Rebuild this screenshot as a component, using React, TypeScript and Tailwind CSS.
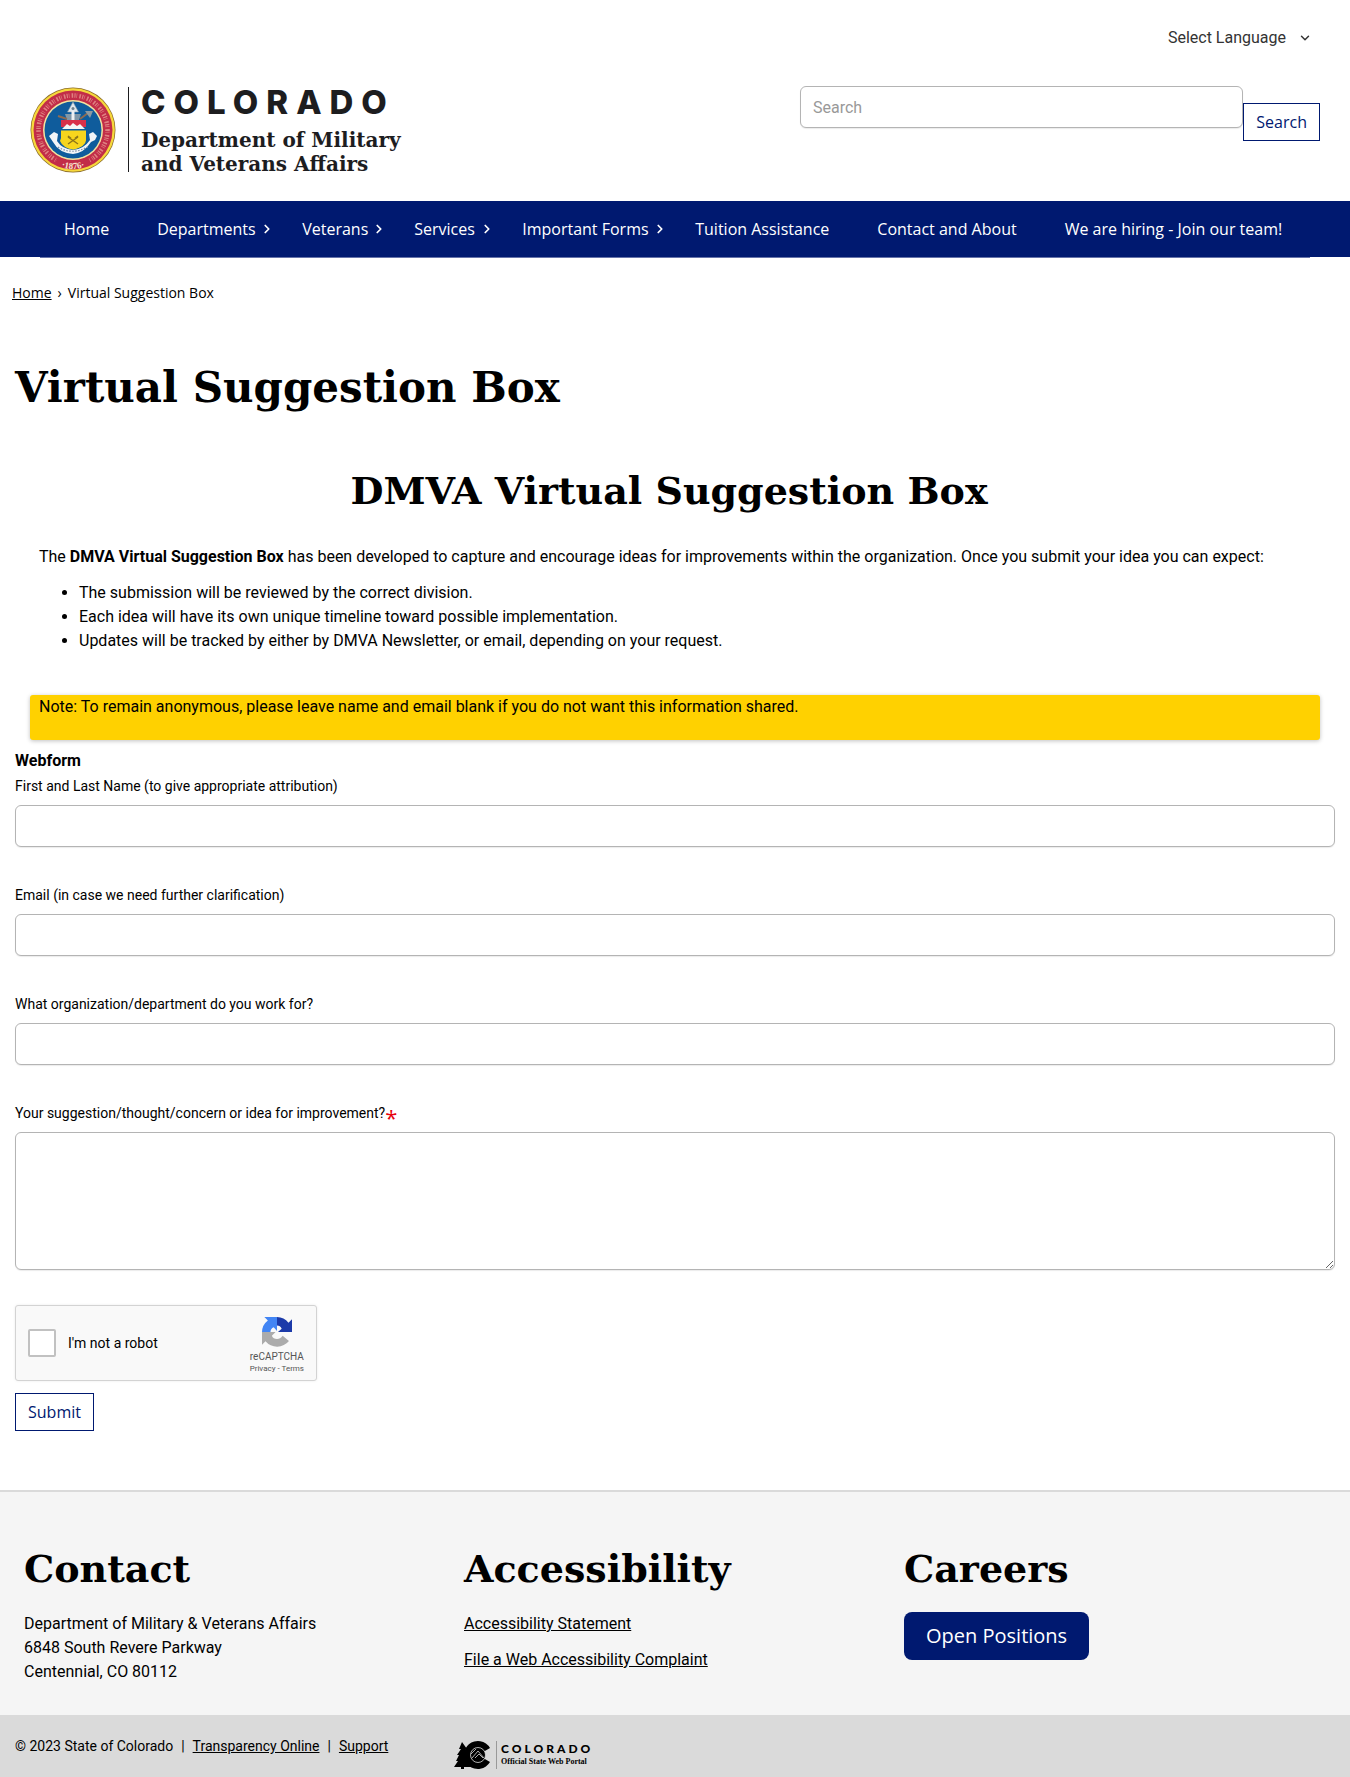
import { ChevronDown, ChevronRight } from "lucide-react";

const NAV = [
  { label: "Home", width: "", menu: false },
  { label: "Departments", width: "w-[145px]", menu: true },
  { label: "Veterans", width: "w-28", menu: true },
  { label: "Services", width: "w-[108px]", menu: true },
  { label: "Important Forms", width: "w-[173px]", menu: true },
  { label: "Tuition Assistance", width: "", menu: false },
  { label: "Contact and About", width: "", menu: false },
  { label: "We are hiring - Join our team!", width: "", menu: false },
];

const SERIF = "font-['DejaVu_Serif',serif] font-bold";
const SANS = "font-['Open_Sans',sans-serif]";
const FIELD =
  "block w-full rounded-md border border-[#b4b4b4] bg-white px-3 shadow-[0_1px_1px_rgba(0,0,0,0.08)] outline-none";
const OUTLINE_BUTTON =
  "h-[38px] border border-[#001970] bg-white px-3 font-['Open_Sans',sans-serif] text-[#001970]";
const LABEL = "mb-1.5 block text-sm leading-[26px]";

function Seal() {
  return (
    <svg viewBox="0 0 86 86" className="size-[86px] shrink-0" role="img" aria-label="State seal">
      <defs>
        <path id="year" d="M24 77Q43 87 62 77" />
      </defs>
      <circle cx="43" cy="43" r="42.500" fill="#8a6a2a" />
      <circle cx="43" cy="43" r="41.800" fill="#f6d83c" />
      <circle cx="43" cy="43" r="39.500" fill="#c22d48" />
      <circle cx="43" cy="43" r="30" fill="#f3e3a0" />
      <circle cx="43" cy="43" r="28.500" fill="#0f5c9c" />
      <circle cx="43" cy="43" r="34.500" fill="none" stroke="#eeb0a0" strokeWidth="4.500" strokeDasharray="1.100 1 0.600 2.200 1.600 1.300" strokeOpacity="0.650" />
      <path d="M43 15l5.500 10h-11z" fill="#dfe8ee" stroke="#8a9aa5" strokeWidth="0.600" />
      <circle cx="43" cy="21.500" r="1.500" fill="#6b7f8c" />
      <path d="M35 27h16l-2 6H37z" fill="#7f97a8" />
      <path d="M28 29l9 3M50 32l8-6" stroke="#8d6b52" strokeWidth="2" fill="none" />
      <path d="M55 24l8 0-3 7z" fill="#8d9aa2" />
      <path d="M41.500 24h3v12h-3z" fill="#eef1f3" />
      <path d="M31 33h25v7H31z" fill="#d8304a" />
      <path d="M32 42l5-5 3 2 3-3 4 3 3-2 5 5z" fill="#f5f5f5" />
      <path d="M31 43.500h25v9q0 7-12.500 10Q31 59.500 31 52.500z" fill="#f7d51d" />
      <path d="M38 49l10 8M48 49l-10 8" stroke="#8c7419" strokeWidth="1.600" />
      <path d="M19 49l5-4 4 2-1 7q5 8 16 9 11-1 17-10l-1-6 4-2 4 4-2 4-4 2q-7 11-18 12Q29 66 23 55z" fill="#f2f5f8" />
      <path d="M30 54q3 7 13 8.500Q54 60 56 53v-2H31z" fill="#f7d51d" />
      <path d="M38 50l10 7M48 50l-10 7" stroke="#8c7419" strokeWidth="1.400" />
      <path d="M28 60q15 9 31-1" stroke="#7d8fa6" strokeWidth="1.200" strokeDasharray="1.500 1.500" fill="none" />
      <path d="M25 76q18 9 36 0l-3-6q-15 8-30 0z" fill="#c22d48" />
      <text className="font-['Liberation_Serif',serif] text-[9px] font-bold" fill="#f8e3cf">
        <textPath href="#year" startOffset="50%" textAnchor="middle">·1876·</textPath>
      </text>
    </svg>
  );
}

function Recaptcha() {
  return (
    <svg viewBox="0 0 64 64" className="size-[30px]" aria-hidden="true">
      <path d="M64 32V5l-7.500 7.500A32 32 0 0 0 32 0v18q7 0 10 7l-8 7h30z" fill="#1c3aa9" />
      <path d="M32 0H5l7.500 7.500A32 32 0 0 0 0 32h18q0-7 7-10l7 8V0z" fill="#4285f4" />
      <path d="M0 32v27l7.500-7.500A32 32 0 0 0 57.500 51L44 40q-5 7-12 7-8 0-11-7l8-8z" fill="#ababab" />
    </svg>
  );
}

function PortalMark() {
  return (
    <svg viewBox="0 0 38 30" className="h-[30px] w-[38px] shrink-0" aria-hidden="true">
      <path d="M8 2l5 7h-2l4 6h-2l4 6h-3l4 6H10v2H7v-2H0l4-6H2l3-6H3l4-6H5z" fill="#000" />
      <path d="M36 8A14 14 0 1 0 36 22L30 18.500A7 7 0 1 1 30 11.500z" fill="#000" />
      <circle cx="24" cy="15" r="7.500" fill="#000" stroke="#dadada" strokeWidth="0.800" />
      <path d="M18 18l6-7 6 7M21 18l4-4 4 4M17 14l5-5" stroke="#dadada" strokeWidth="0.800" fill="none" />
    </svg>
  );
}

function TextField({ id, label }: { id: string; label: string }) {
  return (
    <div className="mb-[35px]">
      <label htmlFor={id} className={LABEL}>
        {label}
      </label>
      <input id={id} type="text" className={`${FIELD} h-[42px]`} />
    </div>
  );
}

export default function App() {
  return (
    <div className="bg-white font-['Roboto',sans-serif] text-base leading-6 text-black">
      <header>
        <div className="flex justify-end px-[38px] pt-[26px]">
          <button type="button" className="flex items-center gap-3 text-[#333]">
            Select Language
            <ChevronDown className="size-3.5" strokeWidth={2.5} />
          </button>
        </div>
        <div className="flex items-start justify-between px-[30px] pt-9 pb-7">
          <a href="#" className="flex h-[87px] items-center text-[#1d1d1f]">
            <Seal />
            <span className="mx-3 h-[85px] w-px bg-[#1d1d1f]" />
            <span className="flex flex-col gap-3 pt-1">
              <span className="font-['Inter',sans-serif] text-[33px] leading-7 font-extrabold tracking-[8px]">
                COLORADO
              </span>
              <span className={`${SERIF} text-xl leading-6`}>
                Department of Military
                <br />
                and Veterans Affairs
              </span>
            </span>
          </a>
          <form className="flex w-[520px]">
            <input
              type="search"
              aria-label="Search"
              placeholder="Search"
              className={`${FIELD} h-[42px] flex-1 placeholder:text-[#999]`}
            />
            <button type="button" className={`${OUTLINE_BUTTON} mt-[17px] shrink-0`}>
              Search
            </button>
          </form>
        </div>
      </header>

      <nav className={`${SANS} bg-[#001970] px-10 text-white`}>
        <ul className="flex h-14 items-center whitespace-nowrap">
          {NAV.map((item) => (
            <li key={item.label} className={item.width}>
              <a href="#" className={`flex items-center justify-between pl-6 ${item.menu ? "pr-1" : "pr-6"}`}>
                {item.label}
                {item.menu && <ChevronRight className="size-3.5" strokeWidth={3} />}
              </a>
            </li>
          ))}
        </ul>
      </nav>
      <div className="mx-10 h-px bg-[#6673a9]" />

      <nav aria-label="Breadcrumb" className={`${SANS} px-3 pt-[23px] text-sm leading-6`}>
        <ol className="flex gap-1.5">
          <li>
            <a href="#" className="underline">Home</a>
          </li>
          <li aria-hidden="true">›</li>
          <li>Virtual Suggestion Box</li>
        </ol>
      </nav>

      <main className="px-[15px]">
        <h1 className={`${SERIF} pt-[53px] text-[42px] leading-[60px]`}>Virtual Suggestion Box</h1>
        <div className="px-6">
          <h2 className={`${SERIF} pt-[43px] pr-3 text-center text-[38px] leading-[60px]`}>
            DMVA Virtual Suggestion Box
          </h2>
          <p className="pt-6">
            The <strong>DMVA Virtual Suggestion Box</strong> has been developed to capture and encourage ideas
            for improvements within the organization. Once you submit your idea you can expect:
          </p>
          <ul className="mt-3 list-disc pl-10">
            <li>The submission will be reviewed by the correct division.</li>
            <li>Each idea will have its own unique timeline toward possible implementation.</li>
            <li>Updates will be tracked by either by DMVA Newsletter, or email, depending on your request.</li>
          </ul>
        </div>
        <p className="mx-[15px] mt-[42px] h-[45px] rounded-[3px] bg-[#ffd100] px-[9px] shadow-[0_1px_4px_rgba(0,0,0,0.25)]">
          Note: To remain anonymous, please leave name and email blank if you do not want this information
          shared.
        </p>

        <form className="pt-[9px]">
          <h3 className="leading-6 font-bold">Webform</h3>
          <TextField id="name" label="First and Last Name (to give appropriate attribution)" />
          <TextField id="email" label="Email (in case we need further clarification)" />
          <TextField id="org" label="What organization/department do you work for?" />
          <label htmlFor="idea" className={LABEL}>
            Your suggestion/thought/concern or idea for improvement?
            <span className={`${SANS} align-[-8px] text-[22px] leading-[0] text-red-600`}>*</span>
          </label>
          <textarea id="idea" className={`${FIELD} h-[138px] resize-y`} />

          <div className="mt-[35px] flex h-[76px] w-[302px] items-center rounded-[3px] border border-[#d3d3d3] bg-[#f9f9f9] px-3 shadow-[0_0_3px_rgba(0,0,0,0.08)]">
            <input
              id="robot"
              type="checkbox"
              className="size-7 appearance-none rounded-xs border-2 border-[#c1c1c1] bg-white"
            />
            <label htmlFor="robot" className="ml-3 text-sm">
              I'm not a robot
            </label>
            <div className="ml-auto flex flex-col items-center pt-1.5 text-[#555]">
              <Recaptcha />
              <span className="mt-1 text-[10px] leading-3">reCAPTCHA</span>
              <span className="text-[8px] leading-3">
                <a href="#">Privacy</a> - <a href="#">Terms</a>
              </span>
            </div>
          </div>
          <button type="button" className={`${OUTLINE_BUTTON} mt-3`}>
            Submit
          </button>
        </form>
      </main>

      <footer className="mt-[59px] border-t-2 border-[#dadada] bg-[#f5f5f5]">
        <div className="grid grid-cols-3 px-6 pt-[45px] pb-[31px]">
          <section>
            <h2 className={`${SERIF} text-[38px] leading-[64px]`}>Contact</h2>
            <p className="pt-[11px]">
              Department of Military &amp; Veterans Affairs
              <br />
              6848 South Revere Parkway
              <br />
              Centennial, CO 80112
            </p>
          </section>
          <section className="pl-1.5">
            <h2 className={`${SERIF} text-[38px] leading-[64px]`}>Accessibility</h2>
            <p className="pt-[11px]">
              <a href="#" className="underline">Accessibility Statement</a>
            </p>
            <p className="pt-3">
              <a href="#" className="underline">File a Web Accessibility Complaint</a>
            </p>
          </section>
          <section className="pl-3">
            <h2 className={`${SERIF} text-[38px] leading-[64px]`}>Careers</h2>
            <a
              href="#"
              className={`${SANS} mt-[11px] inline-flex h-12 items-center rounded-lg bg-[#001970] px-[22px] text-xl text-white`}
            >
              Open Positions
            </a>
          </section>
        </div>
        <div className="flex h-[62px] items-start bg-[#dadada] px-[15px] text-sm">
          <p className="flex w-[439px] gap-2 pt-[19px] leading-6">
            <span>© 2023 State of Colorado</span>
            <span>|</span>
            <a href="#" className="underline">Transparency Online</a>
            <span>|</span>
            <a href="#" className="underline">Support</a>
          </p>
          <a href="#" className="flex items-center pt-[25px]">
            <PortalMark />
            <span className="mx-1 h-7 w-px bg-[#999]" />
            <span className="flex flex-col">
              <span className="font-['Lato',sans-serif] text-xs leading-[14px] font-black tracking-[3px]">
                COLORADO
              </span>
              <span className="font-['Liberation_Serif',serif] text-[8px] leading-3 font-bold">
                Official State Web Portal
              </span>
            </span>
          </a>
        </div>
      </footer>
    </div>
  );
}
